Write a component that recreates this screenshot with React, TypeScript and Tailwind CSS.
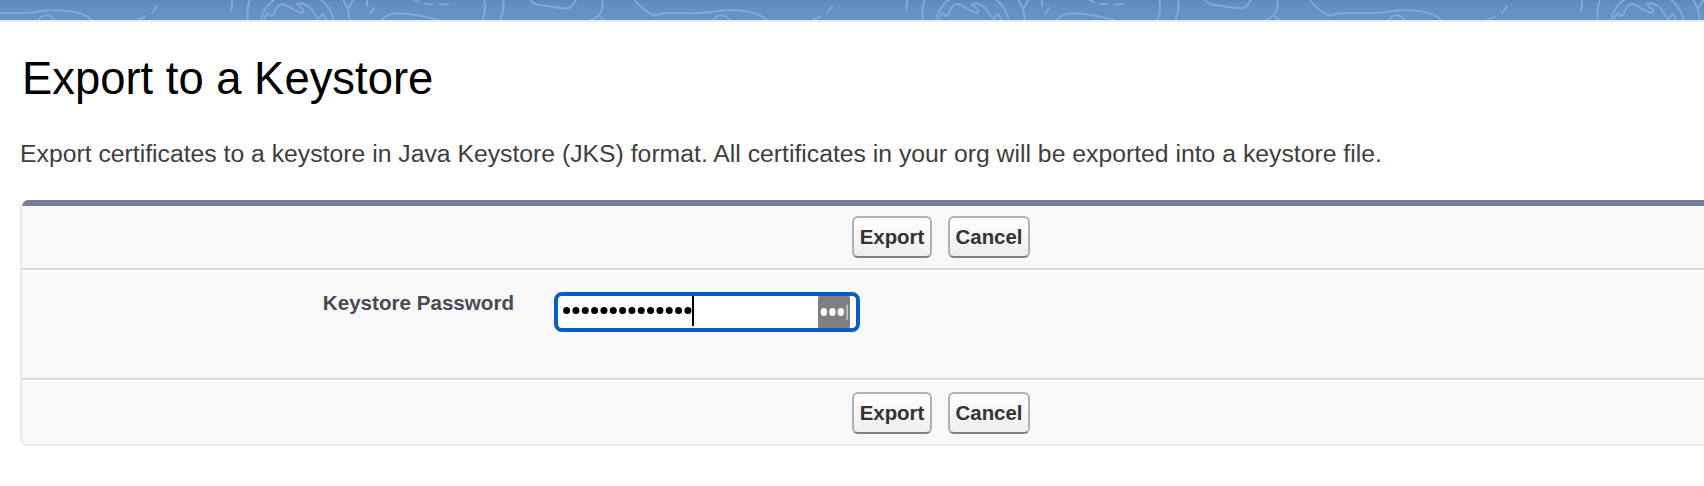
import React from "react";

function TopoBand() {
  return (
    <svg className="block h-5 w-full shrink-0" aria-hidden="true">
      <defs>
        <linearGradient id="sky" x1="0" y1="0" x2="0" y2="1">
          <stop offset="0" stopColor="#5d89b7" />
          <stop offset="0.25" stopColor="#6290c1" />
          <stop offset="1" stopColor="#6593c4" />
        </linearGradient>
        <g id="tile" fill="none" stroke="#84aad3" strokeWidth="2" strokeLinecap="round" strokeLinejoin="round">
          <path d="M-41 -1C-34 9 -24 15 -19 15.5C-15 15 -14 13 -8 13C10 13.500 28 14 38 11.500C48 10 62 10 72 11.500C82 13 88 16 92 20.500" />
          <path d="M38 20.500C42 14 50 13 55 20.500" />
          <path d="M138 19.500L145 17M152 13L157 6.500M232 -1L232 4L231 10.500M250 -1Q246 10 248 21" />
          <path d="M261 21C262 11 268 4 275 -1M320 -1C327 4 332 12 334 21" />
          <path d="M264 21C265 14 268 11 270 16L273 15C276 8 278 4 283 4C289 6 295 12 302 13C304 11 304 10 302 9L297 4C302 2 308 5 311 9C315 13 316 17 318 19L323 14L327 21" />
          <path d="M343 -1L348 9L350 21M354 -1L348 9M367 -1V6M374 8L370 14" />
          <path d="M381 21C386 14 394 12.500 402 13.500C416 14 428 17 440 20.500" />
          <path d="M413 -1L419 2M425 3.500L432 4.500M440 4.500L448 4" />
          <path d="M484 -1Q487 10 482 21M503 -1Q505 10 500 21" />
          <path d="M529 -1C533 4 537 5.500 543 5.500C552 6 562 10 569 8C573 6 573 3 577 -1" />
          <path d="M602 -1C604 9 602 16 590 20.500M600 17L606 21" />
        </g>
      </defs>
      <rect width="1704" height="20" fill="url(#sky)" />
      <use href="#tile" />
      <use href="#tile" x="675" />
      <use href="#tile" x="1350" />
    </svg>
  );
}

const buttonClass =
  "h-[42px] rounded-[6px] border-2 border-[#b0b0b0] border-b-[#808080] bg-linear-to-b from-white to-[#ededed] text-center text-[20.4px] leading-[38px] font-bold whitespace-nowrap text-[#333]";

function Actions() {
  return (
    <div className="flex gap-4 pl-[830px]">
      <button type="button" className={`${buttonClass} w-20`}>Export</button>
      <button type="button" className={`${buttonClass} w-[82px]`}>Cancel</button>
    </div>
  );
}

export default function App() {
  return (
    <div className="flex h-[486px] w-[1704px] flex-col overflow-hidden bg-white font-['Liberation_Sans',Arial,sans-serif]">
      <TopoBand />
      <div className="h-0.5 shrink-0 bg-[#e9ecf2]" />

      <h1 className="mt-[31px] ml-[22px] h-[52px] text-[45.4px] leading-[52px] whitespace-nowrap text-black">
        Export to a Keystore
      </h1>
      <p className="mt-[35px] ml-5 h-7 text-[24.75px] leading-7 whitespace-nowrap text-[#3e3e3c]">
        Export certificates to a keystore in Java Keystore (JKS) format. All certificates in your org will be exported into a keystore file.
      </p>

      <div className="mt-[32px] ml-5 h-[246px] overflow-hidden rounded-l-[8px] border-b-2 border-l-2 border-[#e9e9e9] bg-[#f8f8f8]">
        <div className="-ml-0.5 h-1.5 bg-[#747e96]" />
        <div className="h-16 border-b-2 border-[#dadada] pt-[10px]">
          <Actions />
        </div>
        <div className="flex h-[110px] border-t-2 border-b-2 border-t-white border-b-[#dadada]">
          <label htmlFor="password" className="w-[492px] pt-[19px] text-right text-[20.6px] leading-6 font-bold text-[#4a4a56]">
            Keystore Password
          </label>
          <div className="mt-[20px] ml-10 flex h-10 w-[306px] justify-between rounded-[8px] border-4 border-[#0a5cc9] bg-white pr-1.5 pl-[5px]">
            <div id="password" className="flex">
              <svg className="h-8 w-[131px]" viewBox="0 0 131 32" role="img" aria-label="Password">
                {Array.from({ length: 14 }, (_, i) => (
                  <circle key={i} cx={3.6 + i * 9.33} cy="14.6" r="3.5" fill="black" />
                ))}
                <rect x="129" y="0" width="2" height="30" fill="black" />
              </svg>
            </div>
            <svg className="h-8 w-8" viewBox="0 0 32 32" aria-hidden="true">
              <rect width="32" height="32" rx="1.5" fill="#808080" />
              <g fill="white">
                <ellipse cx="5.900" cy="16" rx="3.200" ry="3.900" />
                <ellipse cx="14.400" cy="16" rx="3.200" ry="3.900" />
                <ellipse cx="22.900" cy="16" rx="3.200" ry="3.900" />
              </g>
              <rect x="28.500" y="8.500" width="1.300" height="15.500" fill="#d4d4d4" />
            </svg>
          </div>
        </div>
        <div className="border-t-2 border-white pt-[10px]">
          <Actions />
        </div>
      </div>
    </div>
  );
}
